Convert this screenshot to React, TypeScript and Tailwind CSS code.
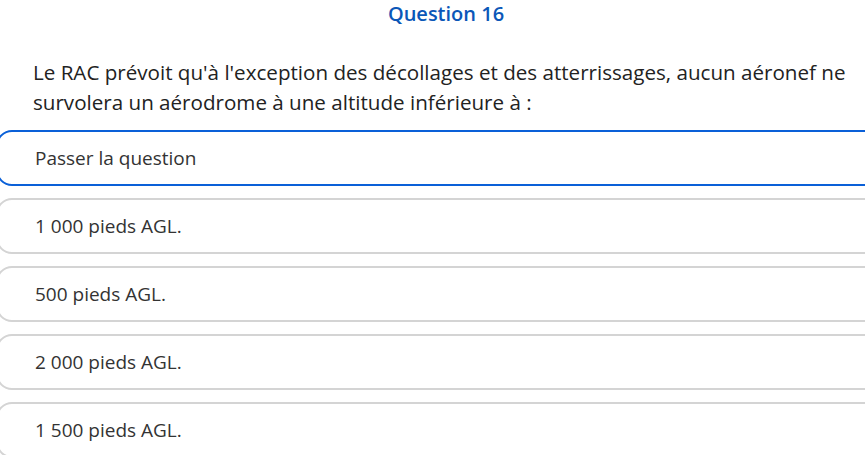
import React from "react";

const options = [
  "Passer la question",
  "1 000 pieds AGL.",
  "500 pieds AGL.",
  "2 000 pieds AGL.",
  "1 500 pieds AGL.",
];

export default function App() {
  return (
    <div className="w-[865px] h-[455px] overflow-hidden bg-white" style={{ fontFamily: '"Open Sans", sans-serif' }}>
      <div className="w-[900px] -ml-[4px]">
        <h1 className="text-center text-[20px] leading-[28px] font-semibold text-[#0b57b8]">Question 16</h1>
        <p className="mt-[29px] pl-[37px] pr-[40px] text-[20.6px] leading-[30px] text-[#222]">
          Le RAC prévoit qu'à l'exception des décollages et des atterrissages, aucun aéronef ne survolera un aérodrome à une altitude inférieure à :
        </p>
        <div className="mt-[13px] flex flex-col gap-[12px]">
          {options.map((o, i) => (
            <div
              key={i}
              className={
                "h-[56px] rounded-[16px] border-2 flex items-center pl-[37px] text-[19px] text-[#333] " +
                (i === 0 ? "border-[#0a60d8]" : "border-[#d4d4d4]")
              }
            >
              {o}
            </div>
          ))}
        </div>
      </div>
    </div>
  );
}
